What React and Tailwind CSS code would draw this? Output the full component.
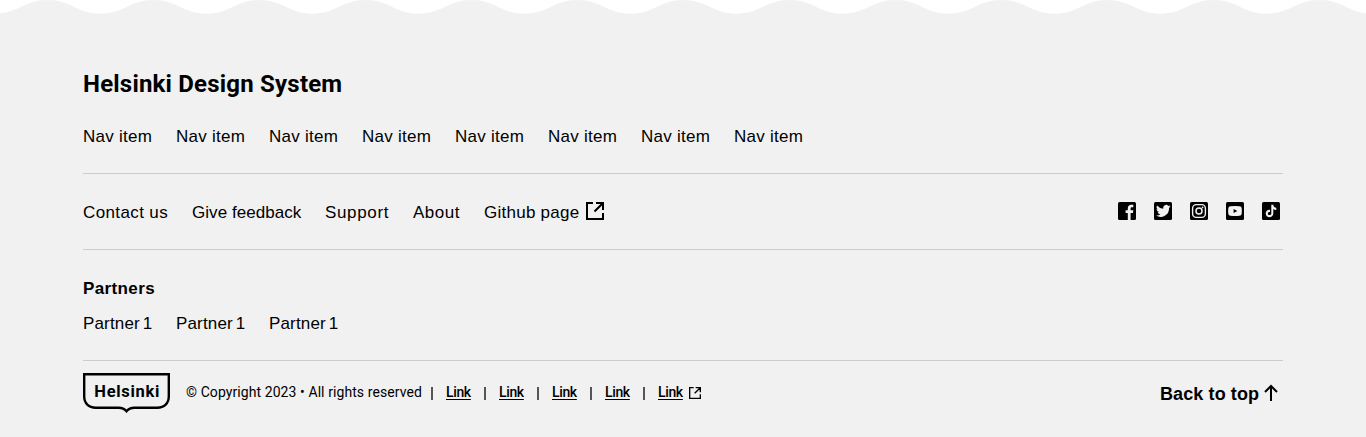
import React from 'react';

const SANS = "font-['Liberation_Sans',sans-serif]";
const ROBOTO = "font-['Roboto',sans-serif]";

const NAV = Array.from({ length: 8 }, () => 'Nav item');

const UTILITIES = [
  { label: 'Contact us', cls: 'w-[85px] tracking-[0.38px]' },
  { label: 'Give feedback', cls: 'w-[109px] tracking-[0.05px]' },
  { label: 'Support', cls: 'w-[64px] tracking-[0.65px]' },
  { label: 'About', cls: 'w-[47px] tracking-[0.5px]' },
  { label: 'Github page', cls: 'w-[96px] tracking-[0.25px]' },
];

const SOCIAL = [
  {
    name: 'Facebook',
    glyph: <path d="M9.800 18v-7H7.600V8.200h2.200V6.300c0-2.300 1.400-3.600 3.600-3.600.9 0 1.700.1 1.900.1v2.500h-1.400c-1.100 0-1.300.6-1.300 1.300v1.600h2.700l-.4 2.800h-2.300v7z" />,
  },
  {
    name: 'Twitter',
    glyph: <path transform="translate(1.300 1.100) scale(.65)" d="M23.600 5c-.8.400-1.700.6-2.600.7a4.600 4.600 0 0 0 2-2.500c-.9.500-1.900.9-2.900 1.100A4.600 4.600 0 0 0 12.200 8.500 13 13 0 0 1 2.700 3.700a4.600 4.600 0 0 0 1.400 6.100c-.7 0-1.500-.2-2.100-.6 0 2.300 1.600 4.200 3.700 4.600-.7.200-1.400.2-2.100.1a4.600 4.600 0 0 0 4.300 3.200A9.300 9.300 0 0 1 1 19a13.100 13.100 0 0 0 20.200-11.600c.9-.7 1.700-1.500 2.400-2.400z" />,
  },
  {
    name: 'Instagram',
    glyph: (
      <>
        <rect x="2.600" y="2.600" width="12.800" height="12.800" rx="3.600" fill="none" stroke="currentColor" strokeWidth="1.400" />
        <circle cx="9" cy="9" r="3" fill="none" stroke="currentColor" strokeWidth="1.500" />
        <circle cx="12.600" cy="5.400" r=".85" />
      </>
    ),
  },
  {
    name: 'YouTube',
    glyph: <path fillRule="evenodd" d="M4.500 4.200Q9 3.700 13.500 4.200Q15.500 4.400 15.700 6.300Q16 9 15.700 11.700Q15.500 13.600 13.500 13.800Q9 14.200 4.500 13.800Q2.500 13.600 2.300 11.700Q2 9 2.300 6.300Q2.500 4.400 4.500 4.200zM7.600 6.900v4.200l3.700-2.100z" />,
  },
  {
    name: 'TikTok',
    glyph: <path d="M9.300 2.800h2c.1 1.800 1.200 2.900 3 3v2.100c-1.200 0-2.100-.3-3-.9v4.300c0 2.300-1.700 3.900-3.800 3.900s-3.800-1.600-3.800-3.700c0-2.300 1.900-4 4.300-3.700v2.200c-1.300-.3-2.200.4-2.200 1.500 0 1 .8 1.600 1.700 1.600 1.100 0 1.800-.7 1.800-1.900z" />,
  },
];

function Wave() {
  return (
    <svg className="block h-[14px] w-full text-[#f1f1f1]" aria-hidden="true">
      <defs>
        <pattern id="wave" x="-5.500" y="0" width="106" height="14" patternUnits="userSpaceOnUse">
          <path
            fill="currentColor"
            d="M0 13.700C24 13.700 29 0 53 0S82 13.700 106 13.700V15H0z"
          />
        </pattern>
      </defs>
      <rect width="100%" height="14" fill="url(#wave)" />
    </svg>
  );
}

function External({ className }) {
  return (
    <svg viewBox="0 0 18 18" className={className} fill="none" stroke="currentColor" strokeWidth="2" aria-hidden="true">
      <path d="M7 1H1v16h16v-6M10 1h7v7M17 1L8.500 9.500" />
    </svg>
  );
}

function Logo() {
  return (
    <svg viewBox="0 0 87 40" className="block h-10 w-[87px]" aria-label="Helsinki">
      <path
        d="M1.200 1.200h84.600v22.100c0 7-4.500 11.500-11.500 11.500H51.500c-4 0-6.200 1.200-8 3.400-1.800-2.200-4-3.400-8-3.400H12.700c-7 0-11.500-4.500-11.500-11.500z"
        fill="none"
        stroke="#000"
        strokeWidth="2.400"
      />
      <text x="11.300" y="23.800" fontSize="16.500" textLength="65" className="font-['Roboto',sans-serif] font-bold">
        Helsinki
      </text>
    </svg>
  );
}

export default function App() {
  return (
    <footer className="h-[437px] overflow-hidden bg-white text-black">
      <Wave />
      <div className="h-[423px] bg-[#f1f1f1] px-[83px] pt-[52px]">
        <h2 className={`${ROBOTO} h-9 whitespace-nowrap text-[24px] leading-9 font-bold tracking-[0.2px]`}>
          Helsinki Design System
        </h2>
        <nav className={`${SANS} mt-[23px] flex h-[49px] gap-6 border-b border-[#cccccc] text-[17px] leading-6 tracking-[0.25px]`}>
          {NAV.map((label, i) => (
            <a key={i} className="w-[69px] shrink-0 whitespace-nowrap">{label}</a>
          ))}
        </nav>
        <div className={`${SANS} flex h-[76px] items-start justify-between border-b border-[#cccccc] pt-[26px] text-[17px] leading-6`}>
          <div className="flex gap-6">
            {UTILITIES.map(({ label, cls }) => (
              <a key={label} className={`${cls} mt-px shrink-0 whitespace-nowrap`}>{label}</a>
            ))}
            <External className="-ml-[18px] mt-[2px] size-[18px]" />
          </div>
          <div className="flex gap-[18px] pt-[2px] pr-[3px]">
            {SOCIAL.map(({ name, glyph }) => (
              <svg key={name} viewBox="0 0 18 18" className="size-[18px] text-[#f1f1f1]" fill="currentColor" aria-label={name}>
                <rect width="18" height="18" rx="1.500" fill="#000" />
                {glyph}
              </svg>
            ))}
          </div>
        </div>
        <section className={`${SANS} h-[111px] border-b border-[#cccccc] pt-[27px] text-[17px] leading-6`}>
          <h3 className="font-bold tracking-[0.38px]">Partners</h3>
          <div className="mt-[11px] flex gap-6">
            {[1, 2, 3].map((i) => (
              <a key={i} className="w-[69px] whitespace-nowrap tracking-[0.15px] [word-spacing:-2px]">Partner 1</a>
            ))}
          </div>
        </section>
        <div className="flex items-start justify-between pt-3">
          <div className={`${ROBOTO} flex text-[14px] leading-5`}>
            <Logo />
            <span className="ml-4 mt-[9px] w-[236px] whitespace-nowrap tracking-[0.08px]">© Copyright 2023 • All rights reserved</span>
            {[0, 1, 2, 3, 4].map((i) => (
              <span key={i} className={`mt-[9px] flex ${i === 0 ? 'ml-[9px]' : 'ml-[13px]'}`}>
                <span className="mt-[5px] mr-[13px] h-[13px] w-[2px] bg-[#555555]" />
                <a className="w-[25px] font-medium tracking-[-0.35px] underline underline-offset-2">Link</a>
              </span>
            ))}
            <External className="ml-[6px] mt-[14px] size-3" />
          </div>
          <a className={`${SANS} mr-[5px] mt-[9px] flex text-[18px] leading-6 font-bold`}>
            <span className="w-[99px] whitespace-nowrap tracking-[0.1px]">Back to top</span>
            <svg viewBox="0 0 14 18" className="ml-[5px] mt-[2px] h-[18px] w-[14px]" fill="none" stroke="currentColor" strokeWidth="2" aria-hidden="true">
              <path d="M7 17V2M1 8l6-6 6 6" />
            </svg>
          </a>
        </div>
      </div>
    </footer>
  );
}
